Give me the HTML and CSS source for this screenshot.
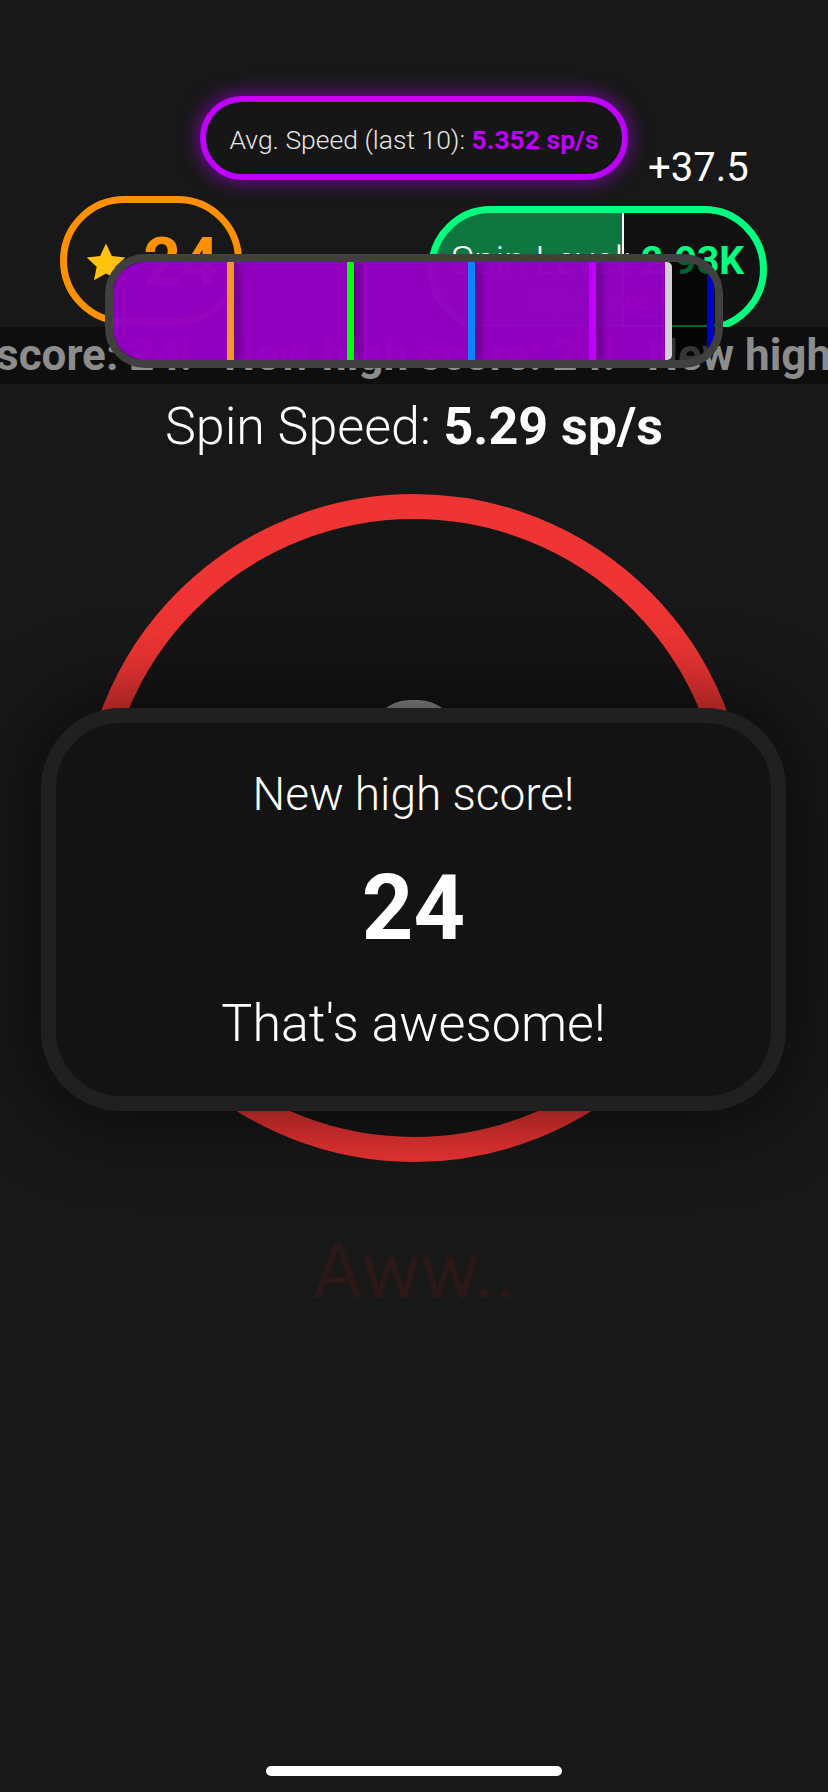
FILE: index.html
```html
<!DOCTYPE html>
<html lang="en">
<head>
<meta charset="utf-8">
<title>Spinner</title>
<link rel="stylesheet" href="styles.css">
</head>
<body>
<div class="app">
  <div class="avg-row">
    <div class="avg-pill"><span class="avg-label">Avg. Speed (last 10): </span><span class="avg-value">5.352 sp/s</span></div>
  </div>
  <div class="bonus">+37.5</div>

  <div class="stats">
    <div class="score-pill">
      <svg class="star" viewBox="0 0 24 24" aria-hidden="true"><path d="M12 1.8l3.05 6.55 7.05.8-5.25 4.85 1.45 7.05L12 17.5l-6.3 3.55 1.45-7.05L1.9 9.15l7.05-.8z" fill="#ffc20e"/></svg>
      <span class="score-num">24</span>
    </div>
    <div class="level-pill">
      <div class="level-line"><span class="level-label">Spin Level: </span><span class="level-value">2.93K</span></div>
      <div class="level-rank">Experienced</div>
    </div>
  </div>

  <div class="ticker">
    <div class="ticker-track">
      <span class="ticker-item">New high score: 24!</span><span class="ticker-item">New high score: 24!</span><span class="ticker-item">New high score: 24!</span>
    </div>
  </div>

  <div class="level-bar">
    <div class="level-fill"></div>
    <span class="mark mark-orange" style="left:114px"></span>
    <span class="mark mark-green" style="left:234px"></span>
    <span class="mark mark-blue" style="left:355px"></span>
    <span class="mark mark-purple" style="left:476px"></span>
    <span class="mark mark-navy" style="left:594px"></span>
  </div>

  <div class="speed"><span class="speed-label">Spin Speed: </span><span class="speed-value">5.29 sp/s</span></div>

  <div class="stage">
    <div class="ring">
      <div class="knob"></div>
    </div>
    <div class="card">
      <div class="card-title">New high score!</div>
      <div class="card-score">24</div>
      <div class="card-msg">That's awesome!</div>
    </div>
  </div>

  <div class="aww">Aww..</div>

  <div class="home-bar"></div>
</div>
</body>
</html>
```

FILE: styles.css
```css
* { box-sizing: border-box; }

html, body {
  margin: 0;
  padding: 0;
  background: #181818;
}

body {
  font-family: Roboto, "Noto Sans", "Liberation Sans", sans-serif;
  color: #ffffff;
  width: 828px;
  height: 1792px;
  overflow: hidden;
}

.app {
  position: relative;
  width: 828px;
  height: 1792px;
  display: flex;
  flex-direction: column;
}

/* Average speed pill */
.avg-row {
  padding-top: 96px;
  display: flex;
  justify-content: center;
}

.avg-pill {
  width: 428px;
  height: 84px;
  border: 6px solid #c000ff;
  border-radius: 42px;
  background: #161616;
  box-shadow: 0 0 18px 3px rgba(176, 0, 240, 0.55);
  display: flex;
  align-items: center;
  justify-content: center;
  font-size: 26.5px;
  padding-top: 3px;
  white-space: pre;
}

.avg-label { font-weight: 300; color: #e6e6e6; }
.avg-value { font-weight: 700; color: #c000ff; }

.bonus {
  position: absolute;
  left: 648px;
  top: 148px;
  font-size: 40px;
  line-height: 40px;
  font-weight: 400;
  color: #ffffff;
}

/* Stats row */
.stats {
  margin-top: 16px;
  height: 131px;
  padding: 0 61px 0 60px;
  display: flex;
  justify-content: space-between;
  align-items: flex-start;
}

.score-pill {
  width: 182px;
  height: 129px;
  border: 7px solid #ff9100;
  border-radius: 65px;
  background: #181818;
  display: flex;
  align-items: center;
  justify-content: center;
  gap: 14px;
  padding-top: 4px;
}

.star { width: 46px; height: 46px; display: block; }

.score-num {
  font-size: 66px;
  line-height: 66px;
  font-weight: 700;
  color: #ff9100;
}

.level-pill {
  margin-top: 10px;
  width: 339px;
  height: 126px;
  border: 7px solid #00ff80;
  border-radius: 63px;
  background: linear-gradient(to right, #0f7640 0, #0f7640 187px, #ffffff 187px, #ffffff 189px, #121212 189px);
  display: flex;
  flex-direction: column;
  align-items: center;
  padding-top: 28px;
  overflow: hidden;
}

.level-line {
  font-size: 39px;
  line-height: 40px;
  white-space: pre;
}

.level-label { font-weight: 300; color: #ffffff; }
.level-value { font-weight: 700; color: #00ff80; }

.level-rank {
  margin-top: 7px;
  font-size: 25px;
  line-height: 26px;
  font-style: italic;
  font-weight: 600;
  color: #8a8a8a;
}

/* Ticker */
.ticker {
  height: 57px;
  background: #0e0e0e;
  overflow: hidden;
  white-space: nowrap;
}

.ticker-track {
  margin-left: -199px;
  display: flex;
}

.ticker-item {
  flex: 0 0 423px;
  font-size: 44px;
  line-height: 57px;
  font-weight: 700;
  color: #8c8c8c;
}

/* Level progress bar overlay */
.level-bar {
  position: absolute;
  left: 105px;
  top: 254px;
  width: 618px;
  height: 114px;
  border: 8px solid #404040;
  border-radius: 40px;
  background: rgba(0, 0, 0, 0.62);
  overflow: hidden;
}

.level-fill {
  width: 559px;
  height: 100%;
  background: rgba(157, 0, 206, 0.93);
  border-right: 7px solid rgba(222, 222, 222, 0.92);
  border-radius: 0 5px 5px 0;
}

.mark {
  position: absolute;
  top: 0;
  bottom: 0;
  width: 7px;
  box-shadow: 6px 0 7px rgba(40, 0, 60, 0.45);
}

.mark-orange { background: #f0962a; }
.mark-green { background: #00ff00; }
.mark-blue { background: #0a84ff; }
.mark-purple { background: #c000ff; }
.mark-navy { background: #0000cc; box-shadow: none; }

/* Spin speed */
.speed {
  margin-top: 13px;
  text-align: center;
  font-size: 52px;
  line-height: 60px;
  white-space: pre;
}

.speed-label { font-weight: 300; }
.speed-value { font-weight: 700; }

/* Spinner stage */
.stage {
  position: relative;
  margin-top: 37px;
  height: 668px;
}

.ring {
  width: 668px;
  height: 668px;
  margin: 0 auto;
  border: 25px solid #ee3434;
  border-radius: 50%;
  background: #151515;
  display: flex;
  flex-direction: column;
  align-items: center;
}

.knob {
  margin-top: 181px;
  width: 88px;
  height: 110px;
  border-radius: 40px 40px 20px 20px;
  background: linear-gradient(#929292, #6e6e6e);
}

.card {
  position: absolute;
  left: 41px;
  top: 214px;
  width: 745px;
  height: 403px;
  border: 15px solid #202020;
  border-radius: 80px;
  background: #131313;
  box-shadow: 0 0 70px 14px rgba(0, 0, 0, 0.5);
  display: flex;
  flex-direction: column;
  align-items: center;
  padding-top: 44px;
}

.card-title {
  font-size: 46px;
  line-height: 54px;
  font-weight: 300;
}

.card-score {
  margin-top: 43px;
  font-size: 90px;
  line-height: 90px;
  font-weight: 700;
}

.card-msg {
  margin-top: 40px;
  font-size: 52px;
  line-height: 60px;
  font-weight: 300;
}

.aww {
  margin-top: 71px;
  text-align: center;
  font-size: 78px;
  line-height: 78px;
  font-weight: 400;
  color: #2b1818;
}

.home-bar {
  margin-top: auto;
  margin-bottom: 16px;
  align-self: center;
  width: 296px;
  height: 10px;
  border-radius: 5px;
  background: #ffffff;
}
```
